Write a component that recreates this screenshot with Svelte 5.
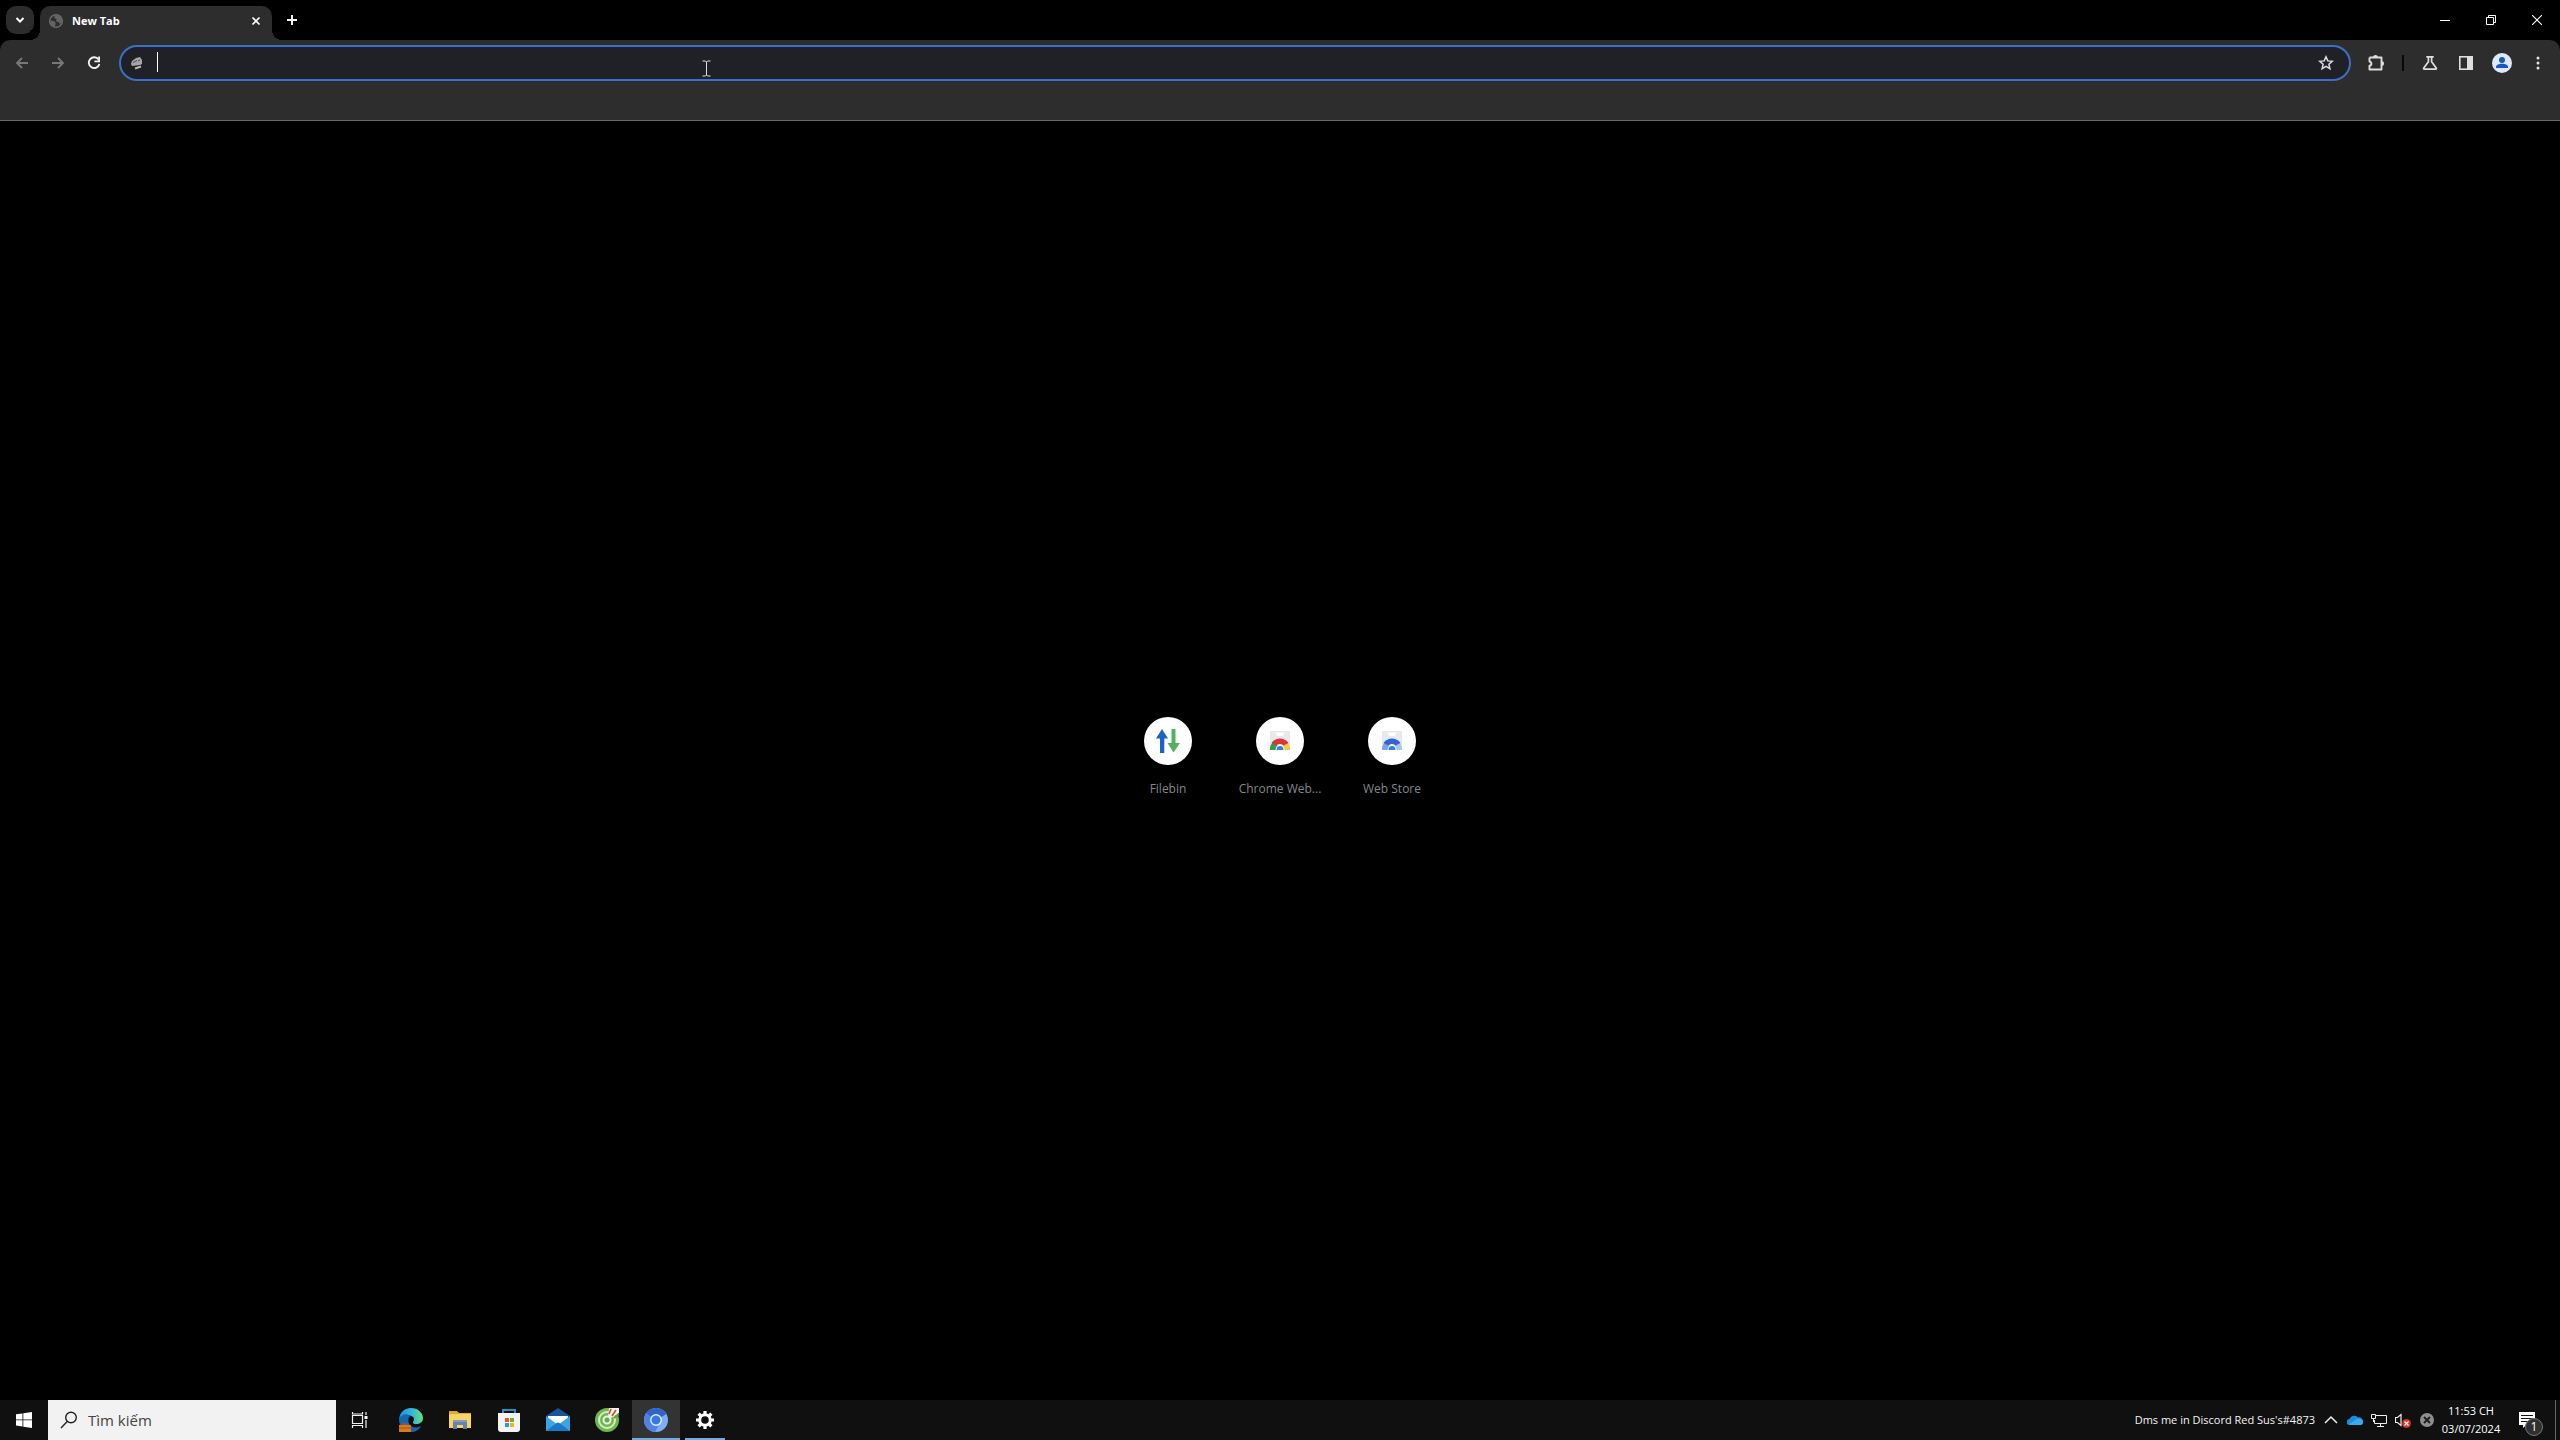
<script>
  let address = $state('');
  let query = $state('');
  const tiles = [
    { name: 'Filebin', kind: 'filebin' },
    { name: 'Chrome Web...', kind: 'store', arcs: ['#d93636', '#2f9e4f', '#f7c948'] },
    { name: 'Web Store', kind: 'store', arcs: ['#3266cf', '#7ba4ee', '#a9c4f5'] }
  ];
  const apps = ['Edge', 'File Explorer', 'Microsoft Store', 'Mail', 'Coc Coc', 'Chromium', 'Settings'];
</script>

<div class="screen">
  <header class="strip">
    <button class="tabsearch" aria-label="Search tabs">
      <svg width="10" height="10" viewBox="0 0 10 10"><path d="M1.5 3l3.5 3.6L8.500 3" fill="none" stroke="#fff" stroke-width="2" /></svg>
    </button>
    <div class="tab">
      <svg width="16" height="16" viewBox="0 0 16 16"><circle cx="8" cy="8" r="6.300" fill="none" stroke="#6a6b6d" stroke-width="1.500" /><path d="M2 7.500l4 .5 1.500 1.500V12L6 14 3 11zM7 2l4 .5L14 6v3l-2 2-1.500-2L8 8.500 8.500 6 6 5z" fill="#626365" /></svg>
      <span class="title">New Tab</span>
      <button class="closetab" aria-label="Close tab">
        <svg width="10" height="10" viewBox="0 0 10 10"><path d="M1.500 1.500l7 7M8.500 1.500l-7 7" stroke="#fff" stroke-width="1.700" /></svg>
      </button>
    </div>
    <button class="newtab" aria-label="New tab">
      <svg width="12" height="12" viewBox="0 0 12 12"><path d="M6 1v10M1 6h10" stroke="#f2f2f2" stroke-width="2" /></svg>
    </button>
    <div class="winbuttons">
      <button aria-label="Minimize"><svg width="10" height="10" viewBox="0 0 10 10"><path d="M0 5.500h10" stroke="#fff" /></svg></button>
      <button aria-label="Restore"><svg width="10" height="10" viewBox="0 0 10 10"><path d="M.5 2.500h7v7h-7zM2.500 2.500v-2h7v7h-2" fill="none" stroke="#fff" /></svg></button>
      <button aria-label="Close"><svg width="10" height="10" viewBox="0 0 10 10"><path d="M0 0l10 10M10 0L0 10" stroke="#fff" stroke-width="1.100" /></svg></button>
    </div>
  </header>

  <div class="chrome">
    <div class="toolbar">
      <button class="tool" aria-label="Back"><svg width="16" height="16" viewBox="0 0 16 16"><path d="M14 8H3M8 3L3 8l5 5" fill="none" stroke="#77787a" stroke-width="1.800" /></svg></button>
      <button class="tool" aria-label="Forward"><svg width="16" height="16" viewBox="0 0 16 16"><path d="M2 8h11M8 3l5 5-5 5" fill="none" stroke="#77787a" stroke-width="1.800" /></svg></button>
      <button class="tool" aria-label="Reload"><svg width="16" height="16" viewBox="0 0 16 16"><path d="M12.600 4.500A5.400 5.400 0 1 0 13.400 9" fill="none" stroke="#f1f1f1" stroke-width="1.900" /><path d="M14 1.500v5.700H8.400V5.400h3.800V1.500z" fill="#f1f1f1" /></svg></button>
      <div class="omnibox">
        <svg width="14" height="14" viewBox="0 0 14 14"><path d="M2 5l4-3 4-1 2 3v4l-2 1-8 1-1-2z" fill="#a6a6a8" /><path d="M3 6.500l4-2M8 5l2-1" stroke="#4a4a50" /><path d="M5 12.500l6-2" stroke="#b8b8ba" stroke-width="2" /></svg>
        <span class="caret"></span>
        <input bind:value={address} aria-label="Address and search bar" />
        <svg class="pointer" width="9" height="17" viewBox="0 0 9 17"><path d="M.5 1h3l1 1 1-1h3M4.500 2v13M.5 16h3l1-1 1 1h3" fill="none" stroke="#dedee2" /></svg>
        <button class="star" aria-label="Bookmark this tab"><svg width="16" height="16" viewBox="0 0 16 16"><path d="M8 1.800l1.800 4.100 4.500.4-3.400 3 1 4.400L8 11.400l-3.900 2.300 1-4.400-3.400-3 4.500-.4z" fill="none" stroke="#dedede" stroke-width="1.500" /></svg></button>
      </div>
      <button class="tool" aria-label="Extensions"><svg width="18" height="18" viewBox="0 0 18 18"><path d="M2.500 3.500h12v3.700M14.500 12v3.500h-12v-3.800c2.500-.3 2.500-3.800 0-4.100V3.500M14.500 7v5" fill="none" stroke="#dedede" stroke-width="1.900" stroke-linejoin="round" /><path d="M6 3.500a2.500 2.500 0 0 1 5 0zM14.500 7a2.500 2.500 0 0 1 0 5z" fill="#dedede" /></svg></button>
      <span class="divider"></span>
      <button class="tool" aria-label="Experiments"><svg width="16" height="16" viewBox="0 0 16 16"><path d="M4.300 1.800h7.400M6.400 2v4.700L1.800 13c-.4.700-.1 1.200.5 1.200h11.400c.6 0 .9-.5.500-1.200L9.600 6.700V2" fill="none" stroke="#dedede" stroke-width="1.700" /></svg></button>
      <button class="tool" aria-label="Side panel"><svg width="16" height="16" viewBox="0 0 16 16"><rect x="1.800" y="1.800" width="12.400" height="12.400" fill="none" stroke="#dedede" stroke-width="1.600" /><path d="M9 1.500h5.500v13H9z" fill="#dedede" /></svg></button>
      <button class="tool" aria-label="Profile"><svg width="20" height="20" viewBox="0 0 20 20"><circle cx="10" cy="10" r="10" fill="#dfe9fb" /><circle cx="10" cy="7" r="3" fill="#1757c2" /><path d="M4 15v-1c0-2.200 3-3.300 6-3.300s6 1.100 6 3.300v1z" fill="#1757c2" /></svg></button>
      <button class="tool" aria-label="Menu"><svg width="16" height="16" viewBox="0 0 16 16" fill="#e4e4e4"><circle cx="8" cy="3" r="1.500" /><circle cx="8" cy="8" r="1.500" /><circle cx="8" cy="13" r="1.500" /></svg></button>
    </div>
  </div>

  <main>
    <nav class="tiles" aria-label="Shortcuts">
      {#each tiles as tile}
        <a href="#{tile.name}">
          <span class="disc">
            {#if tile.kind === 'filebin'}
              <svg width="24" height="24" viewBox="0 0 24 24"><path d="M6 0l6 9.500H8.300V24H4V9.500H0z" fill="#1a61c9" /><path d="M15.500 0h4v14H24l-6.500 9.500L11.500 14h4z" fill="#51b35a" /></svg>
            {:else}
              <svg width="22" height="20" viewBox="0 0 22 20">
                <path d="M1 0h20v19H1z" fill="#e9e9ed" /><path d="M7 1.500h8v1.500a2 2 0 0 1-2 2H9a2 2 0 0 1-2-2z" fill="#fff" />
                <path d="M1 19a10 10 0 0 1 3-8l5 4-2 4z" fill={tile.arcs[1]} /><path d="M21 19a10 10 0 0 0-3-8l-5 4 2 4z" fill={tile.arcs[2]} />
                <path d="M2.500 12C6 6 16 6 19.500 12l-5 2.500c-1.500-2-5.500-2-7 0z" fill={tile.arcs[0]} />
                <path d="M6.500 19a4.500 5 0 0 1 9 0z" fill="#fff" /><path d="M7.500 19a3.500 4 0 0 1 7 0z" fill="#3b7de0" />
              </svg>
            {/if}
          </span>
          <span class="name">{tile.name}</span>
        </a>
      {/each}
    </nav>
  </main>

  <footer>
    <button class="start" aria-label="Start"><svg width="16" height="16" viewBox="0 0 16 16"><path d="M0 2.300L6.500 1.400v6.100H0zM7.300 1.200L16 0v7.500H7.300zM0 8.300h6.500v6.200L0 13.600zM7.300 8.300H16V16l-8.700-1.300z" fill="#fff" /></svg></button>
    <label class="search">
      <svg width="18" height="18" viewBox="0 0 18 18"><circle cx="11" cy="6.500" r="5.300" fill="none" stroke="#222" stroke-width="1.400" /><path d="M7.200 10.500L1 17" stroke="#222" stroke-width="1.400" /></svg>
      <input bind:value={query} placeholder="Tìm kiếm" aria-label="Tìm kiếm" />
    </label>
    <button class="start" aria-label="Task view"><svg width="18" height="18" viewBox="0 0 18 18"><path d="M1.500 4.500h10v8h-10zM1.500 1v2h10V1M1.500 17v-2.500h10V17M15 1v3M15 9v8" fill="none" stroke="#f0f0f0" stroke-width="1.200" /><path d="M13.500 5h3v3h-3z" fill="#fff" /></svg></button>
    <div class="apps">
      {#each apps as app}
        <button class="app" class:active={app === 'Chromium'} class:running={app === 'Settings'} aria-label={app}>
          <svg width="24" height="24" viewBox="0 0 24 24">
            {#if app === 'Edge'}
              <defs><linearGradient id="edge"><stop offset="0" stop-color="#1e8fdc" /><stop offset=".55" stop-color="#35b8d8" /><stop offset="1" stop-color="#69df72" /></linearGradient></defs>
              <path d="M0 13C0 5 5 0 12 0s12 5 12 10c0 4-3 6-7 6-3 0-3-1-3-2s1-1 1-3c0-4-8-5-12-1z" fill="url(#edge)" />
              <path d="M0 11c2-5 8-6 11-3-3 3-2 9 3 11 4 1 6 0 8-1-2 4-6 6-10 6C5 24 0 19 0 11z" fill="#1267b5" />
              <path d="M4 18v-2h4v2" fill="none" stroke="#a65415" stroke-width="1.500" /><path d="M0 17h12v7H0z" fill="#dd7819" /><path d="M0 20h12" stroke="#a65415" />
            {:else if app === 'File Explorer'}
              <path d="M1 3h8l2 2h12v15H1z" fill="#e7a921" /><path d="M1 6h22v14H1z" fill="#f8d565" /><path d="M5 12h14v9h-4v-4H9v4H5z" fill="#6682ae" /><path d="M5 12h14v2H5z" fill="#7b9fc8" />
            {:else if app === 'Microsoft Store'}
              <path d="M6 6V2h12v4" fill="none" stroke="#2390cf" stroke-width="2" /><path d="M1 5h22v16a3 3 0 0 1-3 3H4a3 3 0 0 1-3-3z" fill="#f3f3f3" />
              <path d="M8 10h4v4H8z" fill="#e85525" /><path d="M13 10h4v4h-4z" fill="#72ae27" /><path d="M8 15h4v4H8z" fill="#249ce0" /><path d="M13 15h4v4h-4z" fill="#f3b51c" />
            {:else if app === 'Mail'}
              <path d="M0 8L12 0l12 8v5H0z" fill="#155598" /><path d="M2 8h20v9H2z" fill="#f5f8fc" /><path d="M0 8l12 9 12-9v15H0z" fill="#3ba4e5" /><path d="M0 23l12-9 12 9z" fill="#1979c7" /><path d="M4 8h16l-8 7z" fill="#fff" />
            {:else if app === 'Coc Coc'}
              <circle cx="12" cy="12" r="12" fill="#70b74f" /><circle cx="12" cy="12" r="8" fill="none" stroke="#d3edc5" stroke-width="2" /><circle cx="12" cy="12" r="3.500" fill="#62ac45" stroke="#e8f6e0" stroke-width="2" /><path d="M13 9L14 0h10v5l-8 5z" fill="#f1f2e9" /><path d="M14 6l2-5M17 8l4-6" stroke="#cf4937" stroke-width="1.600" /><path d="M19 10l5-4" stroke="#58a33e" stroke-width="2" />
            {:else if app === 'Chromium'}
              <circle cx="12" cy="12" r="12" fill="#80aef6" /><path d="M12 12L2 5.500a12 12 0 0 1 20.500.5z" fill="#2f66c7" /><path d="M12 12L2 5.500A12 12 0 0 0 11 24l5-9z" fill="#4e83e6" /><circle cx="12" cy="12" r="5.200" fill="#357ae3" stroke="#e5effd" stroke-width="1.400" />
            {:else}
              <circle cx="12" cy="12" r="5.300" fill="none" stroke="#fff" stroke-width="3" />
              <path d="M12 3v4M12 17v4M3 12h4M17 12h4M5.600 5.600l2.900 2.900M15.500 15.500l2.900 2.900M5.600 18.400l2.900-2.900M15.500 8.500l2.900-2.900" stroke="#fff" stroke-width="3.200" />
            {/if}
          </svg>
        </button>
      {/each}
    </div>
    <span class="message">Dms me in Discord Red Sus's#4873</span>
    <div class="tray">
      <button aria-label="Show hidden icons"><svg width="16" height="16" viewBox="0 0 16 16"><path d="M2 11l6-6 6 6" fill="none" stroke="#eee" stroke-width="1.500" /></svg></button>
      <button aria-label="OneDrive"><svg width="16" height="16" viewBox="0 0 16 16"><path d="M3 13a3 3 0 0 1-.5-6A5 5 0 0 1 11 5.500 4 4 0 0 1 16 10c0 2-1 3-3 3z" fill="#198cdb" /><path d="M2 12l8-5c3-1 6 1 6 3 0 2-1 3-3 3H3z" fill="#39acee" /></svg></button>
      <button aria-label="Network"><svg width="16" height="16" viewBox="0 0 16 16"><path d="M5 3.500h10.500v8H3.500V8M9.500 12v2.500M6 14.500h7M.5 2.500h4v4h-4zM2.500 7v3" fill="none" stroke="#eee" /></svg></button>
      <button aria-label="Volume"><svg width="16" height="16" viewBox="0 0 16 16"><path d="M.5 5.500h2l3.500-3v11l-3.500-3h-2z" fill="none" stroke="#eee" stroke-width="1.200" /><circle cx="11.500" cy="11.500" r="4.500" fill="#d42e2e" /><path d="M9.500 9.500l4 4M13.500 9.500l-4 4" stroke="#fff" stroke-width="1.300" /></svg></button>
      <button aria-label="Status"><svg width="16" height="16" viewBox="0 0 16 16"><circle cx="8" cy="8" r="7" fill="#8e8e8e" /><path d="M5 5l6 6M11 5l-6 6" stroke="#202020" stroke-width="2" /></svg></button>
    </div>
    <time class="clock" datetime="2024-07-03T23:53"><span>11:53 CH</span><span>03/07/2024</span></time>
    <button class="notes" aria-label="Notifications">
      <svg width="16" height="16" viewBox="0 0 16 16"><path d="M0 0h16v13h-9l-3 3v-3H0z" fill="#fff" /><path d="M2 3.500h12M2 6.500h12M2 9.500h9" stroke="#151515" /></svg>
      <span class="badge">1</span>
    </button>
    <span class="peek"></span>
  </footer>
</div>

<style>
  :global(body) { margin: 0; background: #000; }
  .screen { height: 100vh; display: flex; flex-direction: column; background: #000; color: #fff; font: 12px/16px "Open Sans", "Noto Sans", sans-serif; overflow: hidden; }
  button { border: 0; padding: 0; margin: 0; background: none; color: inherit; font: inherit; display: flex; align-items: center; justify-content: center; }
  input { border: 0; outline: 0; padding: 0; min-width: 0; flex: 1; background: none; font: inherit; color: inherit; }
  svg { display: block; flex: none; }
  .strip { height: 40px; display: flex; align-items: center; }
  .tabsearch { width: 28px; height: 28px; margin-left: 6px; border-radius: 10px; background: #2c2c2c; }
  .tab { position: relative; box-sizing: border-box; width: 232px; height: 34px; margin: 6px 0 0 6px; padding: 0 10px 4px 8px; display: flex; align-items: center; border-radius: 10px 10px 0 0; background: #2d2d2d; }
  .tab::before, .tab::after { content: ""; position: absolute; bottom: 0; width: 10px; height: 10px; }
  .tab::before { left: -10px; background: radial-gradient(circle at 0 0, #000 10px, #2d2d2d 10px); }
  .tab::after { right: -10px; background: radial-gradient(circle at 100% 0, #000 10px, #2d2d2d 10px); }
  .title { flex: 1; margin-left: 8px; font-weight: 700; font-size: 11px; }
  .closetab { width: 12px; height: 16px; }
  .newtab { width: 28px; height: 28px; margin-left: 6px; }
  .winbuttons { margin-left: auto; display: flex; }
  .winbuttons button { width: 46px; height: 40px; }
  .chrome { height: 80px; border-bottom: 1px solid #686868; background: #2d2d2d; border-radius: 10px 10px 0 0; }
  .toolbar { display: flex; align-items: center; padding: 5px 4px 0; }
  .tool { width: 36px; height: 36px; }
  .omnibox { position: relative; box-sizing: border-box; flex: 1; height: 36px; margin: 0 7px; padding: 0 15px 0 9px; border: 2px solid #416fb9; border-radius: 18px; background: #202127; display: flex; align-items: center; box-shadow: inset 0 0 0 1px #14214a; }
  .caret { width: 1px; height: 20px; margin: 0 6px 2px 13px; background: #fff; }
  .pointer { position: absolute; left: 581px; top: 13px; }
  .divider { width: 2px; height: 16px; margin: 0 8px; background: #080808; }
  main { flex: 1; min-height: 0; display: flex; align-items: center; justify-content: center; }
  .tiles { display: flex; margin-bottom: 8px; }
  .tiles a { width: 112px; display: flex; flex-direction: column; align-items: center; gap: 16px; color: #85878a; text-decoration: none; }
  .disc { width: 48px; height: 48px; border-radius: 50%; background: #fff; display: flex; align-items: center; justify-content: center; }
  footer { height: 40px; display: flex; align-items: center; background: #101010; }
  .start { width: 48px; height: 40px; }
  .search { box-sizing: border-box; width: 288px; height: 40px; padding: 0 12px; display: flex; align-items: center; gap: 10px; background: #f2f2f2; color: #333; font-size: 15px; }
  .search input::placeholder { color: #444; opacity: 1; }
  .apps { display: flex; gap: 1px; margin-left: 3px; }
  .app { position: relative; width: 48px; height: 40px; }
  .active { background: #333; }
  .active::after, .running::after { content: ""; position: absolute; bottom: 0; height: 2px; left: 0; right: 0; background: #76aada; }
  .running::after { left: 4px; right: 4px; }
  .message { margin-left: auto; white-space: nowrap; color: #f4f4f4; font-size: 11px; }
  .tray { display: flex; margin-left: 4px; }
  .tray button { width: 24px; height: 40px; }
  .clock { width: 64px; display: flex; flex-direction: column; align-items: center; line-height: 18px; font-size: 11px; }
  .notes { position: relative; width: 48px; height: 40px; margin-right: 4px; }
  .badge { position: absolute; box-sizing: border-box; left: 22px; top: 18px; width: 18px; height: 18px; border: 1px solid #777; border-radius: 50%; background: #303030; font-size: 12px; line-height: 16px; text-align: center; }
  .peek { width: 1px; height: 40px; margin: 0 4px 0 0; background: #666; }
</style>
